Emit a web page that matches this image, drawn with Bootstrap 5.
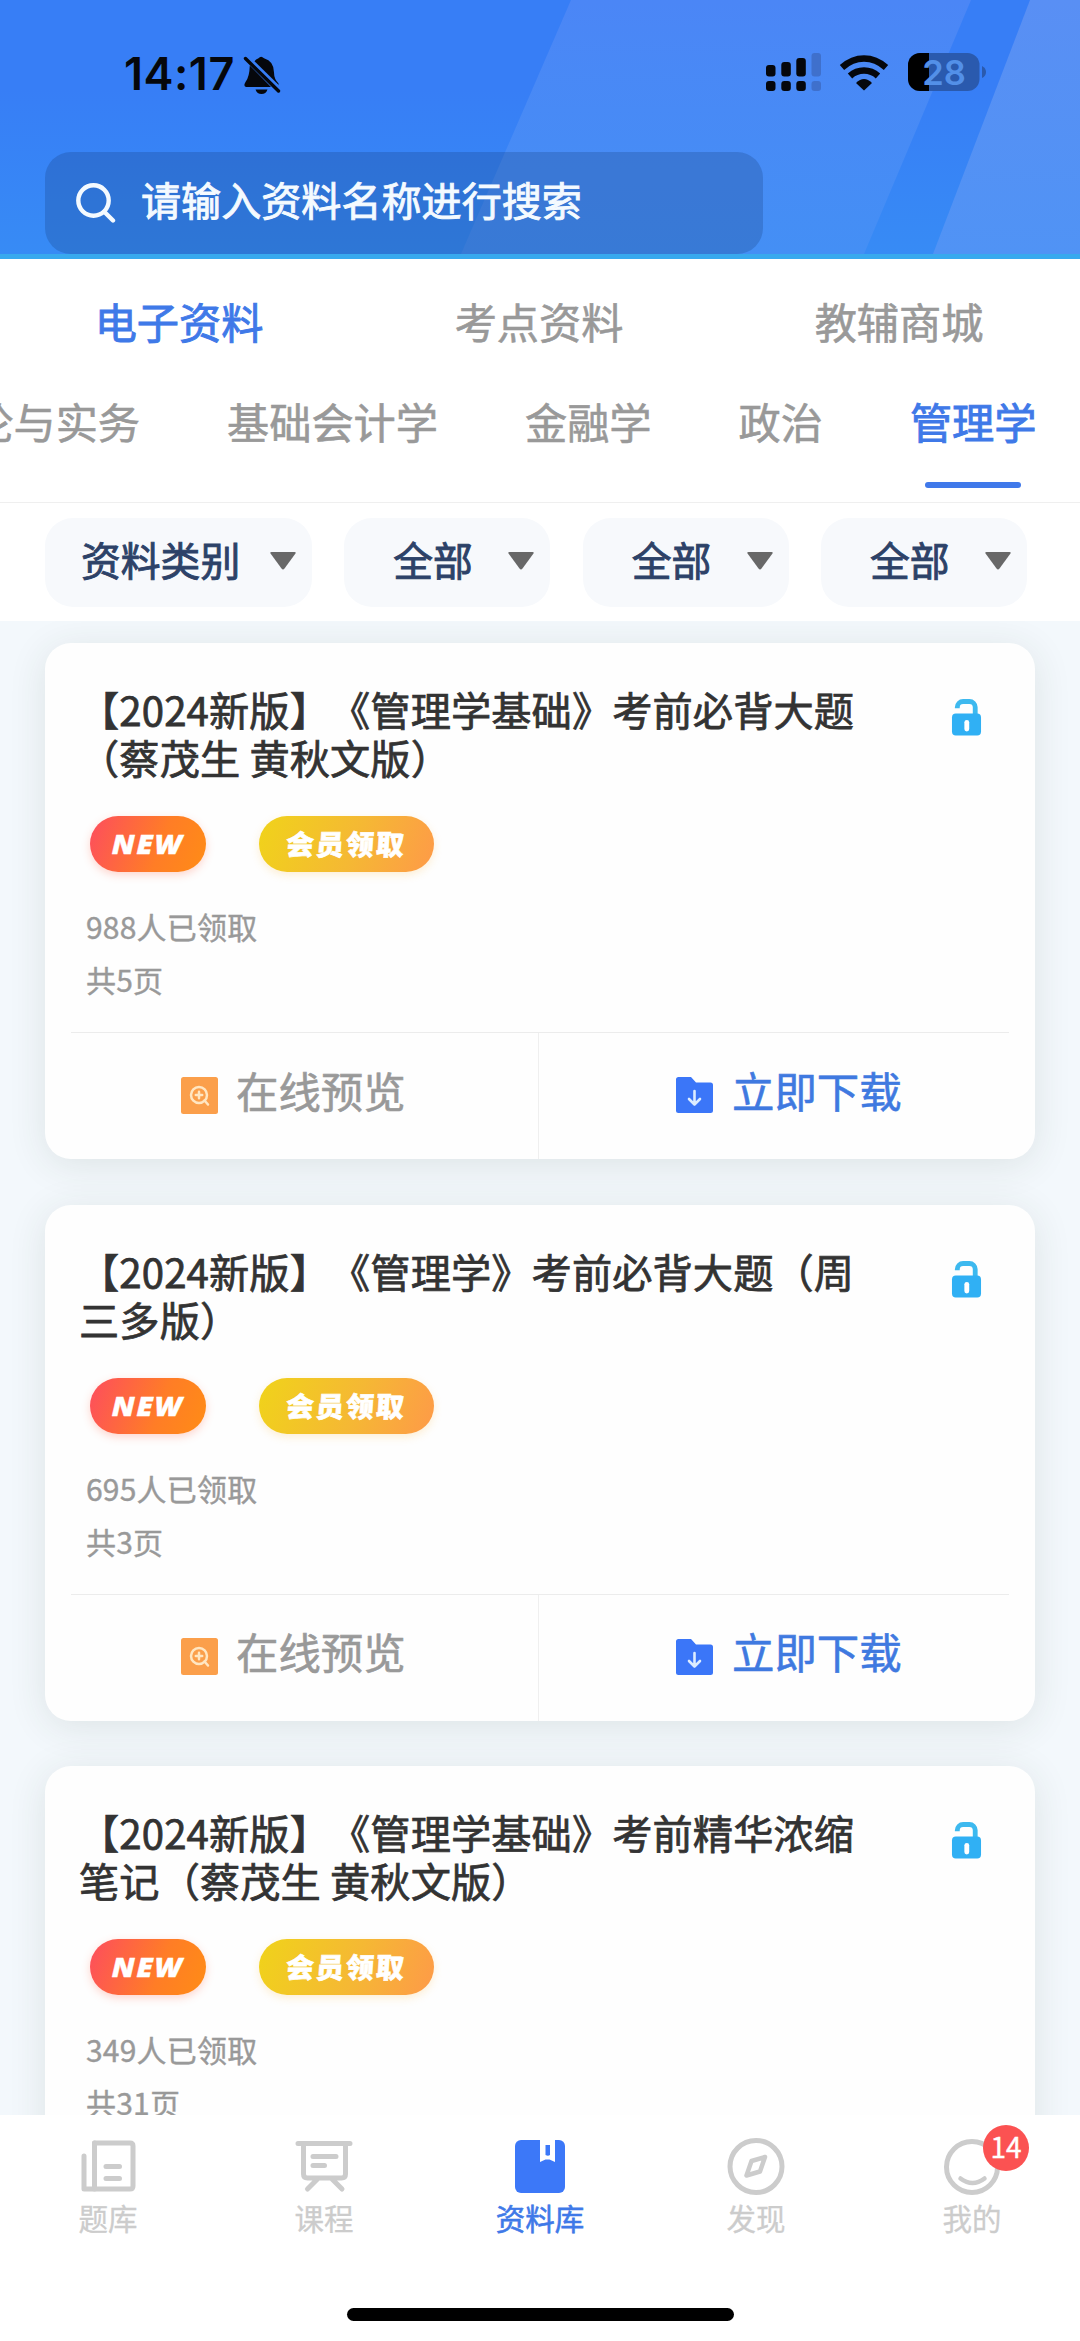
<!DOCTYPE html>
<html lang="zh-CN">
<head>
<meta charset="utf-8">
<meta name="viewport" content="width=device-width, initial-scale=1">
<title>资料库</title>
<link href="https://cdn.jsdelivr.net/npm/bootstrap@5.3.0/dist/css/bootstrap.min.css" rel="stylesheet">
<style>
  body { height: 2341px; overflow: hidden; font-family: "Noto Sans CJK SC", sans-serif; text-spacing-trim: space-all; background: #fff; }
  svg { display: block; flex: none; }
  .app-head { height: 259px; background: linear-gradient(#377ef6 35%, #378bf5); border-bottom: 5px solid #38a9ee; isolation: isolate; }
  .head-art { z-index: -1; }
  .status { height: 152px; padding: 53px 94px 0 124px; font-family: Inter, sans-serif; }
  .clock { width: 119px; font-size: 45px; line-height: 44px; font-weight: 600; letter-spacing: .5px; color: #05070c; margin-top: -1px; }
  .bell { margin-top: 2px; }
  .wifi { margin: 2px 19px 0 17px; }
  .search { margin-left: 45px; width: 718px; height: 102px; padding-left: 31px; border-radius: 26px; background: rgba(10,40,90,.2); color: #f4faff; font-size: 40.1px; line-height: 60px; gap: 25px; }
  .search span, .strong-txt { -webkit-text-stroke: .9px currentColor; }
  .search span { padding-bottom: 9px; }
  .tabs-main { height: 115px; padding-top: 30px; font-size: 42.2px; line-height: 64px; color: #999; -webkit-text-stroke: .6px currentColor; }
  .tabs-main > div { padding-right: 2px; }
  .tabs-sub { height: 129px; font-size: 42.2px; line-height: 60px; color: #999; border-bottom: 1px solid #efefef; overflow: hidden; -webkit-text-stroke: .6px currentColor; }
  .tabs-sub > div { padding: 17px 43.5px 0; white-space: nowrap; flex: none; }
  .on { color: #3f79e8; -webkit-text-stroke: .9px currentColor; }
  .tab-line { width: 96px; height: 6px; border-radius: 3px; background: #4079ea; margin: 31px auto 0; }
  .filters { height: 118px; padding: 15px 53px 0 45px; color: #2d4268; font-size: 39.8px; }
  .pill { height: 89px; border-radius: 28px; background: #f7f9fc; width: 206px; padding: 0 16px 0 49px; }
  .pill span { padding-bottom: 7px; }
  .pill svg { margin-bottom: 3px; }
  .pill-wide { width: 267px; padding-left: 36px; }
  .feed { height: 1494px; overflow: hidden; background: #f3f8fc; padding: 22px 45px 0; }
  .doc { height: 516px; margin-bottom: 45.5px; border-radius: 26px; background: #fefefe; box-shadow: 0 6px 38px rgba(50,65,50,.11); }
  .doc-top { height: 389px; padding: 42px 53px 0 34px; }
  .doc-title { width: 790px; font-size: 40.2px; line-height: 48px; color: #333; letter-spacing: .13px; -webkit-text-stroke: .75px currentColor; }
  .tags { margin: 35px 0 0 11px; gap: 53px; }
  .tag { height: 56px; border-radius: 28px; color: #fff; line-height: 56px; text-align: center; }
  .tag span { display: inline-block; }
  .tag-new { width: 116px; background: linear-gradient(110deg, #fd4d5e, #ff7d26 60%, #ff8c16); box-shadow: 0 3px 9px rgba(255,90,60,.25); font: italic 800 26.5px/57px "Open Sans", sans-serif; letter-spacing: 1.5px; }
  .tag-new span { transform: scaleX(1.1); -webkit-text-stroke: .4px #fff; }
  .tag-vip { width: 175px; background: linear-gradient(110deg, #f0d31a, #f5b834 55%, #fe9a48); box-shadow: 0 3px 9px rgba(250,180,60,.22); font-weight: 900; font-size: 28px; line-height: 54px; letter-spacing: 2px; -webkit-text-stroke: .6px #fff; }
  .tag-vip span { transform: skewX(-4deg); }
  .meta { margin: 28px 0 0 7px; font-size: 30px; line-height: 53px; color: #999; letter-spacing: .2px; -webkit-text-stroke: .4px currentColor; }
  .lock { margin-top: 13px; }
  .acts { height: 127px; color: #999; font-size: 42.4px; }
  .acts-line { height: 1px; margin: 0 26px; background: #ececec; }
  .act { width: 50%; height: 126px; }
  .act svg { margin-bottom: 2px; }
  .act span { padding-bottom: 13px; -webkit-text-stroke: .6px currentColor; }
  .act-l { padding-left: 136px; gap: 18px; }
  .act-r { padding-left: 137px; gap: 19px; margin-left: -2px; color: #3f79e0; border-left: 1px solid #efefef; }
  .tabbar { height: 226px; color: #ccc; font-size: 29.5px; line-height: 40px; -webkit-text-stroke: .3px currentColor; }
  .tabbar svg { -webkit-text-stroke: 0; }
  .tabbar-items { height: 193px; padding-top: 20px; }
  .tabbar-item { width: 216px; }
  .tabbar .on { -webkit-text-stroke: .6px currentColor; }
  .msg { left: 119px; top: -10px; width: 46px; height: 46px; border-radius: 50%; background: #fb5252; color: #fff; font-size: 28px; line-height: 43px; text-align: center; -webkit-text-stroke: .4px #fff; }
  .home { width: 387px; height: 13px; border-radius: 7px; background: #000; }
</style>
</head>
<body>
<svg width="0" height="0" class="position-absolute">
  <symbol id="i-lock" viewBox="0 0 32 38"><path d="M6.500 10V9a6 6 0 0 1 6-6H19a6 6 0 0 1 6 6v10" fill="none" stroke="#3db9ef" stroke-width="5"/><rect x="1" y="15.500" width="30" height="22.500" rx="4" fill="#30b0f4"/><rect x="13.800" y="22" width="5" height="12" rx="2.500" fill="#fff"/></symbol>
  <symbol id="i-view" viewBox="0 0 37 37"><rect width="37" height="37" rx="2.500" fill="#fb9f4b"/><g fill="none" stroke="#ffe6c2" stroke-width="2.500" stroke-linecap="round"><circle cx="18" cy="18" r="8"/><path d="M14.800 18h6.400M18 14.800v6.400M23.500 23.500l3.500 4"/></g></symbol>
  <symbol id="i-down" viewBox="0 0 37 36"><path d="M2.500 0H15l5 5.500h14.500a2.500 2.500 0 0 1 2.500 2.500v25.500a2.500 2.500 0 0 1-2.500 2.500h-32A2.500 2.500 0 0 1 0 33.500v-31A2.500 2.500 0 0 1 2.500 0z" fill="#3b76f8"/><path d="M18.500 14v13.500M13 22l5.500 5.500L24 22" fill="none" stroke="#dcecff" stroke-width="2.600" stroke-linecap="round" stroke-linejoin="round"/></symbol>
  <symbol id="i-tri" viewBox="0 0 26 18"><path d="M1.500 0h23q2 0 .8 1.800L14.500 16.500q-1.500 2-3 0L.7 1.800Q-.5 0 1.500 0z" fill="#686868"/></symbol>
</svg>

<header class="app-head position-relative">
  <svg class="head-art position-absolute top-0 start-0" width="1080" height="254" viewBox="0 0 1080 254">
    <defs>
      <linearGradient id="g1" x2="0" y2="1"><stop stop-color="#4b86f6"/><stop offset="1" stop-color="#448ff5"/></linearGradient>
      <linearGradient id="g2" x2="0" y2="1"><stop stop-color="#598ff4"/><stop offset="1" stop-color="#5093f5"/></linearGradient>
    </defs>
    <path d="M571 0h400L864 254H461z" fill="url(#g1)"/><path d="M1030 0h50v254H933z" fill="url(#g2)"/>
  </svg>
  <div class="status d-flex align-items-start">
    <span class="clock">14:17</span>
    <svg class="bell me-auto" width="38" height="40" viewBox="0 0 38 40">
      <g fill="#05070c"><path d="M9.500 9Q12 4.500 15.500 3.200Q18 .2 21 3.200Q31 6 31 17.500Q31 24 35.500 28.500V31z"/><path d="M6.800 10.500L28 32H3Q0 31 2.500 27Q6.500 22 6.800 10.500z"/><path d="M12.500 34.500h12q-1.500 4.500-6 4.500t-6-4.500z"/></g>
      <path d="M3.500 2.500L36.500 35" stroke="#377ef6" stroke-width="6"/><path d="M2.500 3.500l33 32.500" stroke="#05070c" stroke-width="3.400" stroke-linecap="round"/>
    </svg>
    <svg width="56" height="38" viewBox="0 0 56 38"><g fill="#05070c"><rect y="12" width="9.500" height="11.500" rx="3"/><rect x="15.300" y="9" width="9.500" height="14.500" rx="3"/><rect x="30.300" y="5" width="9.500" height="18.500" rx="3"/><rect y="28" width="9.500" height="10" rx="3"/><rect x="15.300" y="28" width="9.500" height="10" rx="3"/><rect x="30.300" y="28" width="9.500" height="10" rx="3"/></g><g fill="#3f70cc"><rect x="45.500" width="9.500" height="23.500" rx="3"/><rect x="45.500" y="28" width="9.500" height="10" rx="3"/></g></svg>
    <svg class="wifi" width="50" height="36" viewBox="0 0 50 36"><g fill="none" stroke="#05070c"><path d="M3 12.500Q13 3.500 25 3.500T47 12.500" stroke-width="6.500"/><path d="M11 21Q17 15.500 25 15.500T39 21" stroke-width="6.500"/></g><path d="M17 28Q21 24 25 24T33 28L25 35.500z" fill="#05070c"/></svg>
    <svg class="overflow-visible" width="78" height="38" viewBox="0 0 78 38"><defs><clipPath id="bat"><rect width="71.500" height="38" rx="12"/></clipPath></defs><g clip-path="url(#bat)"><rect width="72" height="38" fill="#2a5aae"/><rect width="21" height="38" fill="#000"/></g><path d="M74 13q4 2 4 6t-4 6z" fill="#2a5aae"/><text x="36" y="31.500" text-anchor="middle" font-family="Inter, sans-serif" font-size="34.500" font-weight="600" fill="#5390e8">28</text></svg>
  </div>
  <div class="search d-flex align-items-center">
    <svg width="40" height="40" viewBox="0 0 40 40"><g fill="none" stroke="#f4faff" stroke-width="4.400" stroke-linecap="round"><circle cx="17.500" cy="17.500" r="15.200"/><path d="M28.500 29l8.500 8.500"/></g></svg>
    <span>请输入资料名称进行搜索</span>
  </div>
</header>

<nav class="tabs-main row g-0 text-center">
  <div class="col-4 on">电子资料</div><div class="col-4">考点资料</div><div class="col-4">教辅商城</div>
</nav>
<nav class="tabs-sub d-flex justify-content-end">
  <div>论与实务</div><div>基础会计学</div><div>金融学</div><div>政治</div><div class="on">管理学<div class="tab-line"></div></div>
</nav>
<div class="filters d-flex justify-content-between">
  <div class="pill pill-wide d-flex align-items-center justify-content-between"><span class="strong-txt">资料类别</span><svg width="26" height="18"><use href="#i-tri"/></svg></div>
  <div class="pill d-flex align-items-center justify-content-between"><span class="strong-txt">全部</span><svg width="26" height="18"><use href="#i-tri"/></svg></div>
  <div class="pill d-flex align-items-center justify-content-between"><span class="strong-txt">全部</span><svg width="26" height="18"><use href="#i-tri"/></svg></div>
  <div class="pill d-flex align-items-center justify-content-between"><span class="strong-txt">全部</span><svg width="26" height="18"><use href="#i-tri"/></svg></div>
</div>

<main class="feed">
  <article class="doc">
    <div class="doc-top d-flex justify-content-between">
      <div>
        <div class="doc-title">【2024新版】《管理学基础》考前必背大题（蔡茂生 黄秋文版）</div>
        <div class="tags d-flex"><div class="tag tag-new"><span>NEW</span></div><div class="tag tag-vip"><span>会员领取</span></div></div>
        <div class="meta">988人已领取<br>共5页</div>
      </div>
      <svg class="lock" width="31" height="38"><use href="#i-lock"/></svg>
    </div>
    <div class="acts"><div class="acts-line"></div><div class="d-flex">
      <div class="act act-l d-flex align-items-center"><svg width="37" height="37"><use href="#i-view"/></svg><span>在线预览</span></div>
      <div class="act act-r d-flex align-items-center"><svg width="37" height="36"><use href="#i-down"/></svg><span>立即下载</span></div>
    </div></div>
  </article>
  <article class="doc">
    <div class="doc-top d-flex justify-content-between">
      <div>
        <div class="doc-title">【2024新版】《管理学》考前必背大题（周三多版）</div>
        <div class="tags d-flex"><div class="tag tag-new"><span>NEW</span></div><div class="tag tag-vip"><span>会员领取</span></div></div>
        <div class="meta">695人已领取<br>共3页</div>
      </div>
      <svg class="lock" width="31" height="38"><use href="#i-lock"/></svg>
    </div>
    <div class="acts"><div class="acts-line"></div><div class="d-flex">
      <div class="act act-l d-flex align-items-center"><svg width="37" height="37"><use href="#i-view"/></svg><span>在线预览</span></div>
      <div class="act act-r d-flex align-items-center"><svg width="37" height="36"><use href="#i-down"/></svg><span>立即下载</span></div>
    </div></div>
  </article>
  <article class="doc">
    <div class="doc-top d-flex justify-content-between">
      <div>
        <div class="doc-title">【2024新版】《管理学基础》考前精华浓缩笔记（蔡茂生 黄秋文版）</div>
        <div class="tags d-flex"><div class="tag tag-new"><span>NEW</span></div><div class="tag tag-vip"><span>会员领取</span></div></div>
        <div class="meta">349人已领取<br>共31页</div>
      </div>
      <svg class="lock" width="31" height="38"><use href="#i-lock"/></svg>
    </div>
  </article>
</main>

<footer class="tabbar bg-white">
  <div class="tabbar-items d-flex">
    <div class="tabbar-item d-flex flex-column align-items-center">
      <svg width="60" height="62" viewBox="0 0 60 62"><g fill="none" stroke="#ccc" stroke-width="5" stroke-linecap="round" stroke-linejoin="round"><path d="M16.500 8H52q3 0 3 3v40q0 3-3 3H6V21"/><path d="M16.500 8v46"/><path d="M28 31.500h13.500M28 43.500h13.500"/></g></svg>
      <span>题库</span>
    </div>
    <div class="tabbar-item d-flex flex-column align-items-center">
      <svg width="60" height="62" viewBox="0 0 60 62"><g fill="none" stroke="#ccc" stroke-width="5" stroke-linecap="round" stroke-linejoin="round"><path d="M4 8.500h52M9.500 9v30q0 4 4 4h34q4 0 4-4V9M19 21.500h23M19 30.500h11.500M23.500 44L13.500 54M38 44l10 10"/></g></svg>
      <span>课程</span>
    </div>
    <div class="tabbar-item on d-flex flex-column align-items-center">
      <svg width="60" height="62" viewBox="0 0 60 62"><rect x="5" y="5" width="50" height="53" rx="6" fill="#3c78f8" stroke="none"/><path d="M30 4.500V27l5.500-2.500h4L45 27V4.500z" fill="#fff" stroke="none"/><path d="M35.500 10h4.500v10q-2 1.500-4.500 0z" fill="#3c78f8" stroke="none"/></svg>
      <span>资料库</span>
    </div>
    <div class="tabbar-item d-flex flex-column align-items-center">
      <svg width="60" height="62" viewBox="0 0 60 62"><g fill="none" stroke="#ccc" stroke-linejoin="round"><circle cx="30" cy="31.500" r="26" stroke-width="5"/><path d="M39 22l-13.500 4-5 14.500 13.500-4z" stroke-width="4.500"/></g></svg>
      <span>发现</span>
    </div>
    <div class="tabbar-item position-relative d-flex flex-column align-items-center">
      <svg width="60" height="62" viewBox="0 0 60 62"><g fill="none" stroke="#ccc" stroke-linecap="round"><circle cx="30" cy="32" r="25.500" stroke-width="5"/><path d="M18.500 43.500q12 9 24 0" stroke-width="4.500"/></g></svg>
      <span>我的</span>
      <div class="msg position-absolute">14</div>
    </div>
  </div>
  <div class="home mx-auto"></div>
</footer>
<script src="https://cdn.jsdelivr.net/npm/bootstrap@5.3.0/dist/js/bootstrap.bundle.min.js"></script>
</body>
</html>
